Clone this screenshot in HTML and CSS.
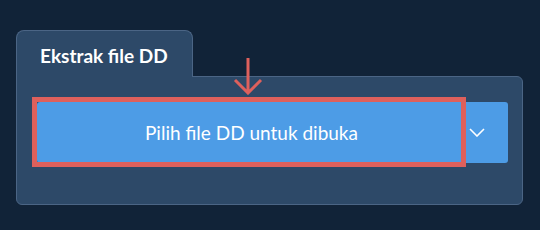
FILE: index.html
```html
<!DOCTYPE html>
<html lang="id">

<head>
  <meta charset="UTF-8">
  <title>Ekstrak file DD</title>
  <link rel="stylesheet" href="styles.css">
</head>

<body>
  <div class="page">
    <div class="tab">Ekstrak file DD</div>
    <div class="card">
      <div class="btn-group">
        <button class="btn-main">
          Pilih file DD untuk dibuka
          <svg class="hint-arrow" width="30" height="37" viewBox="0 0 30 37">
            <path d="M15 0 V35 M2 22 L15 35 L28 22" fill="none" stroke="#de605c" stroke-width="3" />
          </svg>
        </button>
        <button class="btn-drop">
          <svg width="16" height="9" viewBox="0 0 16 9">
            <path d="M1 1 L8 8 L15 1" fill="none" stroke="#fff" stroke-width="1.6" />
          </svg>
        </button>
      </div>
    </div>
  </div>
</body>

</html>
```

FILE: styles.css
```css
html,
body {
  margin: 0;
  height: 100%;
  background-color: #112338;
  font-family: Lato, "Liberation Sans", sans-serif;
}

.page {
  padding: 30px 0 0 16px;
}

.tab {
  position: relative;
  z-index: 1;
  box-sizing: border-box;
  width: 177px;
  height: 47px;
  margin-bottom: -1px;
  padding: 13px 0 0 23px;
  background-color: #2d4968;
  border: 1px solid #4b6585;
  border-bottom: none;
  border-radius: 8px 8px 0 0;
  color: #fff;
  font-size: 19px;
  font-weight: bold;
}

.card {
  box-sizing: border-box;
  width: 507px;
  height: 129px;
  padding: 25px 14px 0 20px;
  background-color: #2d4968;
  border: 1px solid #4b6585;
  border-radius: 0 6px 6px 6px;
}

.btn-group {
  display: flex;
  height: 61px;
}

.btn-main,
.btn-drop {
  border: none;
  margin: 0;
  color: #fff;
  background-color: #4d9ce6;
  font-family: inherit;
  cursor: pointer;
}

.btn-main {
  position: relative;
  width: 429px;
  padding: 0;
  font-size: 19px;
  border-radius: 3px 0 0 3px;
}

/* red frame drawn over the main button */
.btn-main::after {
  content: "";
  position: absolute;
  left: -5px;
  top: -5px;
  right: 0;
  bottom: -4px;
  border: 5px solid #de605c;
}

.hint-arrow {
  position: absolute;
  left: 196px;
  top: -44px;
}

.btn-drop {
  width: 42px;
  padding: 0 0 0 3px;
  display: flex;
  align-items: center;
  border-radius: 0 3px 3px 0;
}
```
